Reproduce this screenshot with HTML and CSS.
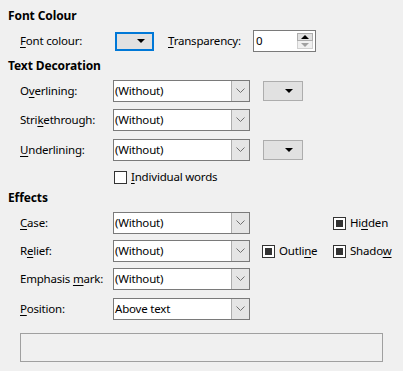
FILE: index.html
```html
<!DOCTYPE html>
<html lang="en">
<head>
    <meta charset="UTF-8">
    <title>Font Effects</title>
    <link rel="stylesheet" href="styles.css">
</head>
<body>
    <div class="heading">Font Colour</div>
    <div class="row first">
        <span class="lbl"><u>F</u>ont colour:</span>
        <button class="colbtn focused"><span class="tri"></span></button>
        <span class="lbl-inline"><u>T</u>ransparency:</span>
        <div class="spin">
            <span class="spin-val">0</span>
            <span class="spin-btns">
                <span class="spin-up"><span class="tri-up"></span></span>
                <span class="spin-down"><span class="tri-down"></span></span>
            </span>
        </div>
    </div>

    <div class="heading sec">Text Decoration</div>
    <div class="row first">
        <span class="lbl">O<u>v</u>erlining:</span>
        <div class="combo"><span class="combo-text">(Without)</span><span class="combo-btn"><svg width="9" height="6" viewBox="0 0 9 6"><polyline points="0.5,0.5 4.5,4.5 8.5,0.5" fill="none" stroke="#707070" stroke-width="1"/></svg></span></div>
        <button class="colbtn side"><span class="tri"></span></button>
    </div>
    <div class="row">
        <span class="lbl">Stri<u>k</u>ethrough:</span>
        <div class="combo"><span class="combo-text">(Without)</span><span class="combo-btn"><svg width="9" height="6" viewBox="0 0 9 6"><polyline points="0.5,0.5 4.5,4.5 8.5,0.5" fill="none" stroke="#707070" stroke-width="1"/></svg></span></div>
    </div>
    <div class="row loose">
        <span class="lbl"><u>U</u>nderlining:</span>
        <div class="combo"><span class="combo-text">(Without)</span><span class="combo-btn"><svg width="9" height="6" viewBox="0 0 9 6"><polyline points="0.5,0.5 4.5,4.5 8.5,0.5" fill="none" stroke="#707070" stroke-width="1"/></svg></span></div>
        <button class="colbtn side"><span class="tri"></span></button>
    </div>
    <div class="row check-row">
        <span class="lbl"></span>
        <span class="check"><span class="box"></span><span><u>I</u>ndividual words</span></span>
    </div>

    <div class="heading effects">Effects</div>
    <div class="row first">
        <span class="lbl"><u>C</u>ase:</span>
        <div class="combo"><span class="combo-text">(Without)</span><span class="combo-btn"><svg width="9" height="6" viewBox="0 0 9 6"><polyline points="0.5,0.5 4.5,4.5 8.5,0.5" fill="none" stroke="#707070" stroke-width="1"/></svg></span></div>
        <span class="opt"></span>
        <span class="check"><span class="box mixed"></span><span>Hi<u>d</u>den</span></span>
    </div>
    <div class="row tight">
        <span class="lbl">R<u>e</u>lief:</span>
        <div class="combo"><span class="combo-text">(Without)</span><span class="combo-btn"><svg width="9" height="6" viewBox="0 0 9 6"><polyline points="0.5,0.5 4.5,4.5 8.5,0.5" fill="none" stroke="#707070" stroke-width="1"/></svg></span></div>
        <span class="opt"><span class="check"><span class="box mixed"></span><span>Outli<u>n</u>e</span></span></span>
        <span class="check"><span class="box mixed"></span><span>Shado<u>w</u></span></span>
    </div>
    <div class="row tight">
        <span class="lbl">Emphasis <u>m</u>ark:</span>
        <div class="combo"><span class="combo-text">(Without)</span><span class="combo-btn"><svg width="9" height="6" viewBox="0 0 9 6"><polyline points="0.5,0.5 4.5,4.5 8.5,0.5" fill="none" stroke="#707070" stroke-width="1"/></svg></span></div>
    </div>
    <div class="row loose">
        <span class="lbl"><u>P</u>osition:</span>
        <div class="combo"><span class="combo-text">Above text</span><span class="combo-btn"><svg width="9" height="6" viewBox="0 0 9 6"><polyline points="0.5,0.5 4.5,4.5 8.5,0.5" fill="none" stroke="#707070" stroke-width="1"/></svg></span></div>
    </div>

    <div class="preview"></div>
</body>
</html>
```

FILE: styles.css
```css
body {
    font-family: "Noto Sans", "Open Sans", sans-serif;
    font-size: 11.5px;
    letter-spacing: -0.2px;
    color: #000;
    background-color: #f0f0f0;
    margin: 0;
    padding: 8px 8px 0 8px;
}
u {
    text-decoration-thickness: 1px;
    text-underline-offset: 2px;
}
.heading {
    font-weight: bold;
    font-size: 12px;
    letter-spacing: -0.1px;
    line-height: 16px;
    height: 16px;
}
.heading.sec {
    margin-top: 6px;
}
.heading.effects {
    margin-top: 5px;
}
.row {
    display: flex;
    align-items: center;
    height: 22px;
    margin-top: 7px;
}
.row.first {
    margin-top: 6px;
}
.row.tight {
    margin-top: 6px;
}
.row.loose {
    margin-top: 8px;
}
.row.check-row {
    height: 16px;
    margin-top: 8px;
}
.lbl {
    width: 93px;
    padding-left: 12px;
    flex-shrink: 0;
    line-height: 16px;
    white-space: nowrap;
}
.lbl-inline {
    margin-left: 14px;
    width: 85px;
    line-height: 16px;
}
/* colour dropdown buttons */
.colbtn {
    display: flex;
    align-items: center;
    justify-content: flex-end;
    box-sizing: border-box;
    padding: 0 9px 0 0;
    background-color: #e1e1e1;
    border: 1px solid #adadad;
    width: 40px;
    height: 20px;
    margin: 0;
}
.colbtn.focused {
    width: 39px;
    height: 19px;
    margin-left: 2px;
    border: 2px solid #0078d7;
    padding-right: 7px;
}
.colbtn.side {
    margin-left: 13px;
}
.tri {
    width: 0;
    height: 0;
    border-left: 4px solid transparent;
    border-right: 4px solid transparent;
    border-top: 4px solid #000;
}
/* spin field */
.spin {
    display: flex;
    align-items: center;
    justify-content: space-between;
    box-sizing: border-box;
    width: 63px;
    height: 22px;
    background-color: #fff;
    border: 1px solid #7a7a7a;
    padding: 0 2px 0 2px;
}
.spin-val {
    line-height: 16px;
}
.spin-btns {
    display: flex;
    flex-direction: column;
    width: 16px;
}
.spin-up, .spin-down {
    display: flex;
    align-items: center;
    justify-content: center;
    height: 8px;
    box-sizing: border-box;
}
.spin-up {
    background-color: #e1e1e1;
    border: 1px solid #adadad;
}
.spin-down {
    background-color: #f0f0f0;
    border: 1px solid #d0d0d0;
    border-top: none;
}
.tri-up {
    border-left: 4px solid transparent;
    border-right: 4px solid transparent;
    border-bottom: 4px solid #000;
}
.tri-down {
    border-left: 4px solid transparent;
    border-right: 4px solid transparent;
    border-top: 4px solid #a0a0a0;
}
/* combo boxes */
.combo {
    display: flex;
    box-sizing: border-box;
    width: 137px;
    height: 22px;
    border: 1px solid #7a7a7a;
    background-color: #fff;
}
.combo-text {
    flex: 1;
    line-height: 20px;
    padding-left: 1px;
}
.combo-btn {
    display: flex;
    align-items: center;
    justify-content: center;
    width: 17px;
    background-color: #e5e5e5;
    border-left: 1px solid #adadad;
}
/* check boxes */
.opt {
    display: flex;
    width: 83px;
    padding-left: 12px;
    box-sizing: border-box;
    flex-shrink: 0;
}
.check {
    display: flex;
    align-items: center;
    gap: 4px;
    line-height: 16px;
    white-space: nowrap;
}
.row.check-row .check {
    margin-left: 1px;
}
.box {
    display: flex;
    align-items: center;
    justify-content: center;
    box-sizing: border-box;
    width: 13px;
    height: 13px;
    border: 1px solid #333;
    background-color: #fff;
}
.box.mixed::after {
    content: "";
    width: 7px;
    height: 7px;
    background-color: #333;
}
.preview {
    margin: 13px 0 0 12px;
    width: 363px;
    height: 29px;
    box-sizing: border-box;
    border: 1px solid #a0a0a0;
}
```
